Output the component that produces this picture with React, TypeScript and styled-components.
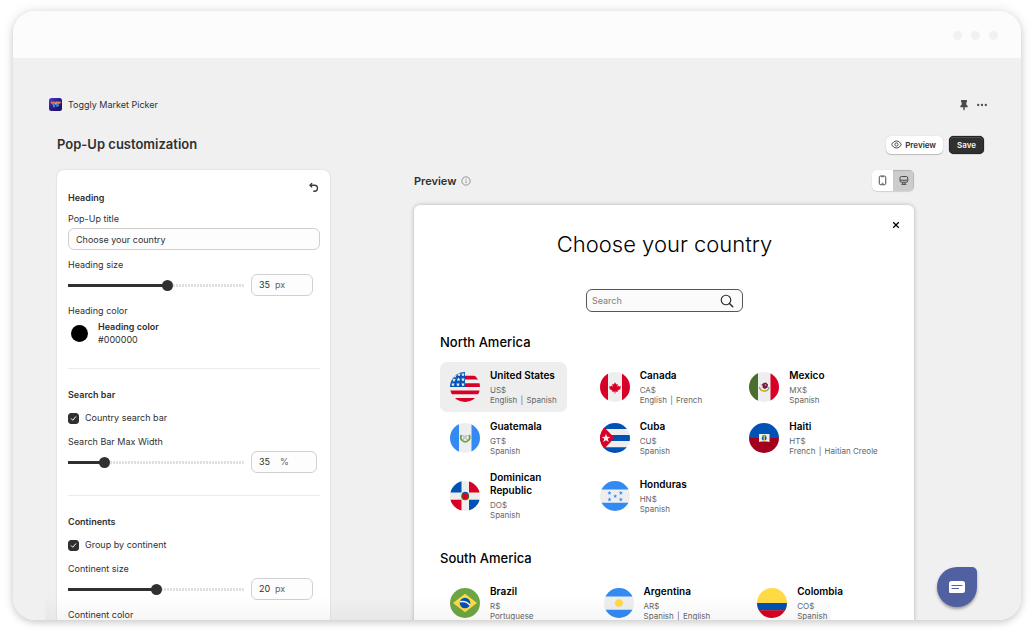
import React, { useState } from "react";
import styled, { createGlobalStyle } from "styled-components";

const GlobalStyle = createGlobalStyle`
  *, *::before, *::after { box-sizing: border-box; }
  html, body { margin: 0; background: #ffffff; }
  body { font-family: Inter, "Liberation Sans", sans-serif; color: #303030; }
  button, input { font: inherit; color: inherit; }
  h1, h2, h3, p, ul { margin: 0; padding: 0; }
`;

/* ---------- window frame ---------- */

const Stage = styled.div`
  display: flex;
  height: 100vh;
  padding: 11px 13px 15px;
`;

const Frame = styled.div`
  position: relative;
  flex: 1;
  min-width: 0;
  display: flex;
  flex-direction: column;
  overflow: hidden;
  background: #f0f0f0;
  border-radius: 22px;
`;

const FrameShadow = styled.div`
  flex: 1;
  min-width: 0;
  display: flex;
  border-radius: 22px;
  box-shadow: 0 0 12px rgba(0, 0, 0, 0.13), 0 3px 6px rgba(0, 0, 0, 0.12);
`;

const FrameBar = styled.div`
  flex: none;
  display: flex;
  align-items: center;
  justify-content: flex-end;
  gap: 9px;
  height: 47px;
  padding: 2px 23px 0 0;
  background: #fcfcfc;
`;

const FrameDot = styled.span`
  width: 9px;
  height: 9px;
  border-radius: 50%;
  background: #f1f1f1;
`;

const Fade = styled.div`
  position: absolute;
  left: 32px;
  right: 190px;
  bottom: 0;
  height: 24px;
  background: linear-gradient(rgba(0, 0, 0, 0), rgba(0, 0, 0, 0.035));
  pointer-events: none;
`;

/* ---------- app header ---------- */

const AppBar = styled.header`
  flex: none;
  display: flex;
  align-items: center;
  gap: 6px;
  height: 28px;
  margin: 33px 22px 0 33px;
  padding: 0 11px 0 3px;
  border-bottom: 1px solid #eeeeee;
`;

const AppName = styled.span`
  flex: 1;
  font-size: 9px;
  line-height: 14px;
`;

const IconButton = styled.button`
  display: inline-flex;
  align-items: center;
  justify-content: center;
  padding: 0;
  border: 0;
  background: none;
  cursor: pointer;
`;

const BarActions = styled.div`
  display: flex;
  align-items: center;
  gap: 7px;
`;

const Page = styled.main`
  padding: 16px 37px 0 44px;
`;

const TitleRow = styled.div`
  display: flex;
  align-items: center;
  gap: 6px;
  height: 19px;
`;

const PageTitle = styled.h1`
  flex: 1;
  font-size: 13px;
  line-height: 19px;
  font-weight: 600;
`;

const PillButton = styled.button<{ $dark?: boolean }>`
  display: inline-flex;
  align-items: center;
  gap: 3px;
  height: 18px;
  padding: ${(p) => (p.$dark ? "0 8px" : "0 7px 0 5px")};
  border: 0;
  border-radius: 5px;
  font-size: 8px;
  line-height: 12px;
  font-weight: 600;
  cursor: pointer;
  color: ${(p) => (p.$dark ? "#f4f4f4" : "#303030")};
  background: ${(p) => (p.$dark ? "#303030" : "#ffffff")};
  box-shadow: ${(p) =>
    p.$dark
      ? "inset 0 0 0 1px #242424, inset 0 1px 0 1px #4c4c4c, 0 0 1px #000000"
      : "0 1px 1px rgba(0, 0, 0, 0.2), 0 0 1px rgba(0, 0, 0, 0.2)"};
`;

const Columns = styled.div`
  display: flex;
  align-items: flex-start;
  gap: 84px;
  margin-top: 16px;
`;

/* ---------- settings panel ---------- */

const Panel = styled.form`
  position: relative;
  flex: 0 0 273px;
  padding: 21px 10px 24px 11px;
  background: #ffffff;
  border-radius: 7px;
  box-shadow: 0 0 2px rgba(0, 0, 0, 0.16);
`;

const ResetButton = styled(IconButton)`
  position: absolute;
  top: 12px;
  right: 11px;
`;

const Section = styled.section`
  display: flex;
  flex-direction: column;
  padding-bottom: 22px;

  & + & {
    padding-top: 19px;
    border-top: 1px solid #ebebeb;
  }
`;

const SectionTitle = styled.h2`
  margin-bottom: 7px;
  font-size: 9px;
  line-height: 14px;
  font-weight: 600;
`;

const Field = styled.div`
  display: flex;
  flex-direction: column;
  gap: 2px;

  & + & { margin-top: 8px; }
`;

const labelText = `
  font-size: 9px;
  line-height: 14px;
`;

const Label = styled.label`
  ${labelText}
`;

const TextInput = styled.input`
  width: 100%;
  height: 22px;
  padding: 0 7px;
  border: 1px solid #cfcfcf;
  border-radius: 6px;
  background: #fdfdfd;
  font-size: 9px;
  line-height: 14px;
`;

const SliderRow = styled.div`
  display: flex;
  align-items: center;
  gap: 7px;
`;

const Slider = styled.input`
  appearance: none;
  flex: 0 1 176px;
  min-width: 0;
  height: 11px;
  margin: 0;
  background:
    linear-gradient(#303030, #303030) 0 4px / var(--fill) 3px no-repeat,
    repeating-linear-gradient(90deg, #e0e0e0 0 2px, #ffffff 2px 3px) 0 4px / 100% 3px no-repeat;
  cursor: pointer;

  &::-webkit-slider-thumb {
    appearance: none;
    width: 11px;
    height: 11px;
    border-radius: 50%;
    background: #303030;
  }
`;

const NumberBox = styled.div<{ $wide?: boolean }>`
  display: flex;
  align-items: center;
  width: ${(p) => (p.$wide ? "66px" : "62px")};
  height: 22px;
  padding-left: 7px;
  border: 1px solid #d0d0d0;
  border-radius: 6px;
  background: #fdfdfd;
  font-size: 9px;
  line-height: 14px;
`;

const NumberInput = styled.input<{ $wide?: boolean }>`
  appearance: textfield;
  width: ${(p) => (p.$wide ? "21px" : "16px")};
  padding: 0;
  border: 0;
  outline: 0;
  background: none;

  &::-webkit-inner-spin-button { appearance: none; margin: 0; }
`;

const Unit = styled.span`
  color: #616161;
`;

const CheckRow = styled.label`
  display: flex;
  align-items: center;
  gap: 6px;
  margin: 2px 0 10px;
  ${labelText}
`;

const CheckShell = styled.span`
  display: grid;
  width: 11px;
  height: 11px;

  > * { grid-area: 1 / 1; }
`;

const CheckInput = styled.input`
  appearance: none;
  width: 11px;
  height: 11px;
  margin: 0;
  border: 1px solid #303030;
  border-radius: 3px;

  &:checked { background: #303030; }
`;

const ColorRow = styled.div`
  display: flex;
  align-items: center;
  gap: 10px;
  padding: 0 3px;
`;

const Swatch = styled.button`
  width: 17px;
  height: 17px;
  padding: 0;
  border: 0;
  border-radius: 50%;
  background: #000000;
`;

const ColorText = styled.div`
  font-size: 9px;
  line-height: 13px;
`;

const ColorName = styled.p`
  font-weight: 600;
`;

/* ---------- preview ---------- */

const PreviewColumn = styled.section`
  flex: 1;
  min-width: 0;
  margin-right: 70px;
`;

const PreviewHead = styled.div`
  display: flex;
  align-items: center;
  gap: 5px;
  height: 21px;
  margin-bottom: 14px;
`;

const PreviewTitle = styled.h2`
  font-size: 11px;
  line-height: 16px;
  font-weight: 600;
`;

const Segment = styled.div`
  display: flex;
  height: 21px;
  margin-left: auto;
  overflow: hidden;
  border-radius: 5px;
  box-shadow: 0 1px 1px rgba(0, 0, 0, 0.12), 0 0 1px rgba(0, 0, 0, 0.15);
`;

const SegmentButton = styled(IconButton)<{ $active?: boolean }>`
  width: 21px;
  height: 21px;
  background: ${(p) => (p.$active ? "#cccccc" : "#ffffff")};
  box-shadow: ${(p) => (p.$active ? "inset 0 1px 1px #b0b0b0, inset -1px 0 1px #bdbdbd" : "none")};
`;

const Popup = styled.div`
  position: relative;
  display: flex;
  flex-direction: column;
  padding: 24px 25px 40px 26px;
  background: #ffffff;
  border-radius: 6px;
  box-shadow: 0 0 4px rgba(0, 0, 0, 0.26);
`;

const CloseButton = styled(IconButton)`
  position: absolute;
  top: 15px;
  right: 13px;
  color: #000000;
`;

const PopupTitle = styled.h2`
  text-align: center;
  font-size: 22px;
  line-height: 30px;
  font-weight: 300;
  color: #000000;
`;

const SearchBox = styled.div`
  display: flex;
  align-items: center;
  align-self: center;
  height: 23px;
  margin: 30px 0 21px;
  padding: 0 8px 0 5px;
  border: 1px solid #555555;
  border-radius: 6px;
  background: #fbfbfb;
`;

const SearchInput = styled.input`
  flex: 1;
  min-width: 0;
  padding: 0;
  border: 0;
  outline: 0;
  background: none;
  font-size: 9px;
  line-height: 14px;

  &::placeholder { color: #808080; }
`;

const Continent = styled.section`
  & + & { margin-top: 22px; }
`;

const ContinentTitle = styled.h3`
  margin-bottom: 11px;
  font-size: 13px;
  line-height: 18px;
  font-weight: 500;
  color: #000000;
`;

const CountryGrid = styled.ul<{ $columns: string }>`
  display: grid;
  grid-template-columns: ${(p) => p.$columns};
  align-items: center;
  justify-items: start;
  row-gap: 1px;
  list-style: none;
`;

const Country = styled.li<{ $selected?: boolean }>`
  display: flex;
  align-items: center;
  gap: 10px;
  padding: 7px 10px;
  border-radius: 7px;
  background: ${(p) => (p.$selected ? "#eeeeee" : "transparent")};
`;

const Flag = styled.svg`
  flex: none;
  width: 30px;
  height: 30px;
  border-radius: 50%;
`;

const CountryName = styled.p`
  max-width: 90px;
  margin-bottom: 3px;
  font-size: 10px;
  line-height: 13px;
  font-weight: 600;
  color: #000000;
`;

const CountryMeta = styled.p`
  font-size: 8px;
  line-height: 10px;
  color: #666666;
  white-space: nowrap;
`;

const Divider = styled.span`
  margin: 0 1px;
`;

const ChatButton = styled.button`
  position: absolute;
  right: 44px;
  bottom: 13px;
  display: flex;
  align-items: center;
  justify-content: center;
  width: 40px;
  height: 40px;
  padding: 0;
  border: 0;
  border-radius: 50% 5px 50% 50%;
  background: #5060a0;
  box-shadow: 0 2px 3px rgba(0, 0, 0, 0.35);
  cursor: pointer;
`;

/* ---------- icons ---------- */

const AppLogo = () => (
  <svg width="13" height="13" viewBox="0 0 26 26" aria-hidden="true">
    <defs>
      <linearGradient id="logo" x1="0" y1="0" x2="1" y2="1">
        <stop offset="0" stopColor="#4a3fd0" />
        <stop offset="0.5" stopColor="#2a1a86" />
        <stop offset="1" stopColor="#1d0f66" />
      </linearGradient>
    </defs>
    <rect width="26" height="26" rx="5" fill="url(#logo)" />
    <path d="M3 7h8l2 2-3 4H7L4 11z" fill="#e8663c" />
    <path d="M13 7h10l1 3-4 2h-6z" fill="#f08048" />
    <path d="M7 12l4 1 1 5-3 1z" fill="#4aa3e0" />
    <path d="M13 12l5-2 3 5-4 3-3-1z" fill="#2f7fd8" />
    <path d="M12 8l4 2-2 4-3-2z" fill="#55c8d8" />
  </svg>
);

const PinIcon = () => (
  <svg width="10" height="12" viewBox="0 0 20 24" fill="#4a4a4a" aria-hidden="true">
    <path d="M5 2h10a1 1 0 0 1 1 1v2a1 1 0 0 1-1 1l-.6 5c2 1 3 2.600 3 4.500a1 1 0 0 1-1 1H11.500V21L10 23 8.500 21v-4.500H3.600a1 1 0 0 1-1-1c0-1.900 1-3.500 3-4.500L5 6a1 1 0 0 1-1-1V3a1 1 0 0 1 1-1z" />
  </svg>
);

const MoreIcon = () => (
  <svg width="12" height="12" viewBox="0 0 12 12" fill="#4a4a4a" aria-hidden="true">
    <circle cx="2.200" cy="6" r="1.150" />
    <circle cx="6" cy="6" r="1.150" />
    <circle cx="9.800" cy="6" r="1.150" />
  </svg>
);

const EyeIcon = () => (
  <svg width="11" height="11" viewBox="0 0 22 22" fill="none" stroke="#4a4a4a" strokeWidth="2" aria-hidden="true">
    <path d="M1.600 11C3 7 6.600 4 11 4s8 3 9.400 7c-1.400 4-5 7-9.400 7s-8-3-9.400-7z" />
    <circle cx="11" cy="11" r="3.200" />
  </svg>
);

const UndoIcon = () => (
  <svg width="11" height="11" viewBox="0 0 22 22" fill="none" stroke="#3c3c3c" strokeWidth="2.600" strokeLinecap="round" strokeLinejoin="round" aria-hidden="true">
    <path d="M7.500 3L4 6.500 7.500 10" />
    <path d="M4.500 6.500H13a5.700 5.700 0 0 1 0 12h-1.500" />
  </svg>
);

const InfoIcon = () => (
  <svg width="10" height="10" viewBox="0 0 20 20" fill="none" stroke="#8a8a8a" strokeWidth="1.800" aria-hidden="true">
    <circle cx="10" cy="10" r="8.300" />
    <path d="M10 9.200v5M10 5.500v2" />
  </svg>
);

const PhoneIcon = () => (
  <svg width="9" height="11" viewBox="0 0 18 22" fill="none" stroke="#4a4a4a" strokeWidth="2" aria-hidden="true">
    <rect x="2.500" y="2" width="13" height="17.500" rx="3" />
    <path d="M6.500 3.500h5M7 16.500h4" strokeWidth="1.600" />
  </svg>
);

const DesktopIcon = () => (
  <svg width="10" height="11" viewBox="0 0 20 22" fill="none" stroke="#4a4a4a" strokeWidth="2" aria-hidden="true">
    <rect x="2" y="3" width="15.500" height="11.500" rx="3" />
    <path d="M2 10.500h15.500M7.500 15v3M12 15v3M5 18.800h9.500" />
  </svg>
);

const CloseIcon = () => (
  <svg width="10" height="10" viewBox="0 0 10 10" stroke="#000000" strokeWidth="1.300" aria-hidden="true">
    <path d="M2.200 2.200l5.600 5.600M7.800 2.200L2.200 7.800" />
  </svg>
);

const SearchIcon = () => (
  <svg width="14" height="14" viewBox="0 0 28 28" fill="none" stroke="#303030" strokeWidth="2.400" strokeLinecap="round" aria-hidden="true">
    <circle cx="12" cy="12" r="9.500" />
    <path d="M19 19l6.500 6.500" strokeWidth="3" />
  </svg>
);

const CheckIcon = () => (
  <svg width="11" height="11" viewBox="0 0 22 22" fill="none" stroke="#ffffff" strokeWidth="2" strokeLinecap="round" strokeLinejoin="round" pointerEvents="none" aria-hidden="true">
    <path d="M6.500 11.500l3 3 6-7" />
  </svg>
);

const ChatIcon = () => (
  <svg width="16" height="12" viewBox="0 0 32 24" aria-hidden="true">
    <path d="M5 0h22a5 5 0 0 1 5 5v14a5 5 0 0 1-5 5H2a2 2 0 0 1-2-2V5a5 5 0 0 1 5-5z" fill="#ffffff" />
    <path d="M6 9h20M6 15h13" stroke="#5060a0" strokeWidth="2.400" strokeLinecap="round" />
  </svg>
);

/* ---------- flags, drawn on a 30 x 30 grid ---------- */

const star = (cx: number, cy: number, r: number) =>
  Array.from({ length: 10 }, (_, i) => {
    const a = -Math.PI / 2 + (i * Math.PI) / 5;
    const d = i % 2 ? r * 0.4 : r;
    return `${cx + d * Math.cos(a)},${cy + d * Math.sin(a)}`;
  }).join(" ");

const flags: Record<string, React.ReactNode> = {
  us: (
    <>
      <rect width="30" height="30" fill="#eeeeee" />
      <path d="M15 3.750h15V7.500H15zM15 11.250h15V15H15zM0 18.500h30v3.750H0zM0 26h30v4H0z" fill="#d80027" />
      <rect width="15" height="15" fill="#0052b4" />
      {[[5, 4], [9, 2.5], [13, 2.5], [4, 8], [8.500, 7.500], [13, 7.500], [3, 12.500], [8, 12.500], [13, 12.500]].map(([x, y]) => (
        <polygon key={`${x}-${y}`} points={star(x, y, 2.200)} fill="#eeeeee" />
      ))}
    </>
  ),
  ca: (
    <>
      <rect width="30" height="30" fill="#eeeeee" />
      <path d="M0 0h8v30H0zM22 0h8v30h-8z" fill="#d80027" />
      <path d="M15 10.200l1.300 2.300 1.500-.7-.5 3 1.500-1.200.4 1 1.900-.4-1 2 .7.500-3.300 2 .2 1.300-2.300-.5v2h-.8v-2l-2.300.5.2-1.300-3.300-2 .7-.5-1-2 1.900.4.400-1 1.500 1.200-.5-3 1.500.7z" fill="#d80027" />
    </>
  ),
  mx: (
    <>
      <rect width="30" height="30" fill="#eeeeee" />
      <rect width="9" height="30" fill="#496e2d" />
      <rect x="21.500" width="8.500" height="30" fill="#d80027" />
      <path d="M10.500 15a4.800 4.800 0 0 0 9.500 0" fill="none" stroke="#7fa87a" strokeWidth="1.400" />
      <path d="M12.500 13l2-2 2.500-.5 2 2-.5 3-2.500 1.500-2-1z" fill="#751a46" />
      <path d="M11.500 12.500l2 1.200-.5 2.300M16 12l1 2" fill="none" stroke="#c9b59a" strokeWidth="0.900" />
      <path d="M13 18.500h4" stroke="#ffb300" strokeWidth="1.200" />
    </>
  ),
  gt: (
    <>
      <rect width="30" height="30" fill="#eeeeee" />
      <path d="M0 0h9v30H0zM21.500 0H30v30h-8.500z" fill="#338af3" />
      <path d="M11.500 12a4.400 4.400 0 1 0 7.500 0" fill="none" stroke="#6da544" strokeWidth="1.800" />
      <path d="M12.500 12l5 5M17.500 12l-5 5" stroke="#9a9a9a" strokeWidth="1" />
      <rect x="13.500" y="12.500" width="3" height="3.500" fill="#c4c4c4" />
    </>
  ),
  cu: (
    <>
      <rect width="30" height="30" fill="#eeeeee" />
      <path d="M0 0h30v6H0zM0 12h30v6H0zM0 24.300h30V30H0z" fill="#0052b4" />
      <path d="M0 0l4 4 10.500 11L4 26l-4 4z" fill="#d80027" />
      <polygon points={star(6, 15.300, 4.600)} fill="#eeeeee" />
    </>
  ),
  ht: (
    <>
      <rect width="30" height="15" fill="#0052b4" />
      <rect y="15" width="30" height="15" fill="#a2001d" />
      <rect x="10" y="11" width="10.500" height="8" fill="#eeeeee" />
      <path d="M10 19c2-1.500 8.500-1.500 10.500 0z" fill="#6da544" />
      <circle cx="15.200" cy="15.200" r="2.400" fill="#0052b4" />
      <path d="M15.200 13v5" stroke="#ffda44" strokeWidth="1.200" />
      <path d="M13 13.200c1-1.200 3.500-1.200 4.500 0" stroke="#6da544" strokeWidth="1" fill="none" />
    </>
  ),
  dr: (
    <>
      <rect width="30" height="30" fill="#eeeeee" />
      <path d="M0 0h11.500v11.500H0zM19 18.700h11V30H19z" fill="#0052b4" />
      <path d="M19 0h11v11.500H19zM0 18.700h11.500V30H0z" fill="#d80027" />
      <circle cx="15.200" cy="15.200" r="3.400" fill="#d80027" stroke="#496e2d" strokeWidth="1.200" />
      <path d="M12.300 12.800a3.800 3.800 0 0 1 5.800 0" stroke="#0052b4" strokeWidth="1.200" fill="none" />
    </>
  ),
  hn: (
    <>
      <rect width="30" height="30" fill="#eeeeee" />
      <path d="M0 0h30v8.500H0zM0 21.700h30V30H0z" fill="#338af3" />
      {[[9.500, 12], [20.800, 12], [15.200, 15.200], [9.500, 18.500], [20.800, 18.500]].map(([x, y]) => (
        <polygon key={`${x}-${y}`} points={star(x, y, 2.200)} fill="#338af3" />
      ))}
    </>
  ),
  br: (
    <>
      <rect width="30" height="30" fill="#6da544" />
      <path d="M15 5.800L27 15 15 24.200 3 15z" fill="#ffda44" />
      <circle cx="15" cy="15" r="5.300" fill="#0052b4" />
      <path d="M10 13.800c3.500-.8 7.500.3 10 3.400" stroke="#eeeeee" strokeWidth="1.400" fill="none" />
    </>
  ),
  ar: (
    <>
      <rect width="30" height="30" fill="#eeeeee" />
      <path d="M0 0h30v8.500H0zM0 21.700h30V30H0z" fill="#338af3" />
      <circle cx="15" cy="15" r="3.500" fill="#ffda44" stroke="#ffda44" strokeWidth="1.400" strokeDasharray="1.200 1" />
      <circle cx="15" cy="15" r="3.300" fill="#ffda44" />
    </>
  ),
  co: (
    <>
      <rect width="30" height="30" fill="#ffda44" />
      <rect y="15" width="30" height="7.500" fill="#0052b4" />
      <rect y="22.300" width="30" height="7.700" fill="#d80027" />
    </>
  ),
};

/* ---------- data ---------- */

type CountryData = { flag: string; name: string; currency: string; languages: string[]; selected?: boolean };

const continents: { name: string; columns: string; countries: CountryData[] }[] = [
  {
    name: "North America",
    columns: "repeat(3, minmax(0, 1fr))",
    countries: [
      { flag: "us", name: "United States", currency: "US$", languages: ["English", "Spanish"], selected: true },
      { flag: "ca", name: "Canada", currency: "CA$", languages: ["English", "French"] },
      { flag: "mx", name: "Mexico", currency: "MX$", languages: ["Spanish"] },
      { flag: "gt", name: "Guatemala", currency: "GT$", languages: ["Spanish"] },
      { flag: "cu", name: "Cuba", currency: "CU$", languages: ["Spanish"] },
      { flag: "ht", name: "Haiti", currency: "HT$", languages: ["French", "Haitian Creole"] },
      { flag: "dr", name: "Dominican Republic", currency: "DO$", languages: ["Spanish"] },
      { flag: "hn", name: "Honduras", currency: "HN$", languages: ["Spanish"] },
    ],
  },
  {
    name: "South America",
    columns: "minmax(0, 13fr) minmax(0, 13fr) minmax(0, 12fr)",
    countries: [
      { flag: "br", name: "Brazil", currency: "R$", languages: ["Portuguese"] },
      { flag: "ar", name: "Argentina", currency: "AR$", languages: ["Spanish", "English"] },
      { flag: "co", name: "Colombia", currency: "CO$", languages: ["Spanish"] },
    ],
  },
];

/* ---------- controls ---------- */

type SizeFieldProps = {
  id: string;
  label: string;
  unit: string;
  min: number;
  max: number;
  value: number;
  wide?: boolean;
  onChange: (value: number) => void;
};

const SizeField = ({ id, label, unit, min, max, value, wide, onChange }: SizeFieldProps) => (
  <Field>
    <Label htmlFor={id}>{label}</Label>
    <SliderRow>
      <Slider
        id={id}
        type="range"
        min={min}
        max={max}
        value={value}
        onChange={(e) => onChange(Number(e.target.value))}
        style={{ "--fill": `${((value - min) / (max - min)) * 100}%` } as React.CSSProperties}
      />
      <NumberBox $wide={wide}>
        <NumberInput
          $wide={wide}
          type="number"
          aria-label={label}
          value={value}
          onChange={(e) => onChange(Number(e.target.value))}
        />
        <Unit>{unit}</Unit>
      </NumberBox>
    </SliderRow>
  </Field>
);

type CheckFieldProps = { label: string; checked: boolean; onChange: (checked: boolean) => void };

const CheckField = ({ label, checked, onChange }: CheckFieldProps) => (
  <CheckRow>
    <CheckShell>
      <CheckInput type="checkbox" checked={checked} onChange={(e) => onChange(e.target.checked)} />
      {checked && <CheckIcon />}
    </CheckShell>
    {label}
  </CheckRow>
);

export default function App() {
  const [title, setTitle] = useState("Choose your country");
  const [headingSize, setHeadingSize] = useState(35);
  const [searchOn, setSearchOn] = useState(true);
  const [searchWidth, setSearchWidth] = useState(35);
  const [grouped, setGrouped] = useState(true);
  const [continentSize, setContinentSize] = useState(20);

  return (
    <Stage>
      <GlobalStyle />
      <FrameShadow>
        <Frame>
          <FrameBar>
            <FrameDot />
            <FrameDot />
            <FrameDot />
          </FrameBar>

          <AppBar>
            <AppLogo />
            <AppName>Toggly Market Picker</AppName>
            <BarActions>
              <IconButton aria-label="Pin app"><PinIcon /></IconButton>
              <IconButton aria-label="More actions"><MoreIcon /></IconButton>
            </BarActions>
          </AppBar>

          <Page>
            <TitleRow>
              <PageTitle>Pop-Up customization</PageTitle>
              <PillButton><EyeIcon />Preview</PillButton>
              <PillButton $dark>Save</PillButton>
            </TitleRow>

            <Columns>
              <Panel>
                <ResetButton type="button" aria-label="Reset"><UndoIcon /></ResetButton>
                <Section>
                  <SectionTitle>Heading</SectionTitle>
                  <Field>
                    <Label htmlFor="popup-title">Pop-Up title</Label>
                    <TextInput id="popup-title" value={title} onChange={(e) => setTitle(e.target.value)} />
                  </Field>
                  <SizeField id="heading-size" label="Heading size" unit="px" min={1} max={61} value={headingSize} onChange={setHeadingSize} />
                  <Field>
                    <Label htmlFor="heading-color">Heading color</Label>
                    <ColorRow>
                      <Swatch id="heading-color" type="button" />
                      <ColorText>
                        <ColorName>Heading color</ColorName>
                        <p>#000000</p>
                      </ColorText>
                    </ColorRow>
                  </Field>
                </Section>

                <Section>
                  <SectionTitle>Search bar</SectionTitle>
                  <CheckField label="Country search bar" checked={searchOn} onChange={setSearchOn} />
                  <SizeField id="search-width" label="Search Bar Max Width" unit="%" min={20} max={100} value={searchWidth} wide onChange={setSearchWidth} />
                </Section>

                <Section>
                  <SectionTitle>Continents</SectionTitle>
                  <CheckField label="Group by continent" checked={grouped} onChange={setGrouped} />
                  <SizeField id="continent-size" label="Continent size" unit="px" min={10} max={30} value={continentSize} onChange={setContinentSize} />
                  <Field>
                    <Label htmlFor="continent-color">Continent color</Label>
                    <ColorRow>
                      <Swatch id="continent-color" type="button" />
                    </ColorRow>
                  </Field>
                </Section>
              </Panel>

              <PreviewColumn>
                <PreviewHead>
                  <PreviewTitle>Preview</PreviewTitle>
                  <InfoIcon />
                  <Segment>
                    <SegmentButton aria-label="Mobile preview"><PhoneIcon /></SegmentButton>
                    <SegmentButton $active aria-label="Desktop preview"><DesktopIcon /></SegmentButton>
                  </Segment>
                </PreviewHead>

                <Popup>
                  <CloseButton aria-label="Close"><CloseIcon /></CloseButton>
                  <PopupTitle>{title}</PopupTitle>
                  {searchOn && (
                    <SearchBox style={{ width: `${searchWidth}%` }}>
                      <SearchInput placeholder="Search" aria-label="Search countries" />
                      <SearchIcon />
                    </SearchBox>
                  )}
                  {continents.map((continent) => (
                    <Continent key={continent.name}>
                      {grouped && <ContinentTitle>{continent.name}</ContinentTitle>}
                      <CountryGrid $columns={continent.columns}>
                        {continent.countries.map((c) => (
                          <Country key={c.name} $selected={c.selected}>
                            <Flag viewBox="0 0 30 30" aria-hidden="true">{flags[c.flag]}</Flag>
                            <div>
                              <CountryName>{c.name}</CountryName>
                              <CountryMeta>{c.currency}</CountryMeta>
                              <CountryMeta>
                                {c.languages.map((language, i) => (
                                  <React.Fragment key={language}>
                                    {i > 0 && <Divider> | </Divider>}
                                    {language}
                                  </React.Fragment>
                                ))}
                              </CountryMeta>
                            </div>
                          </Country>
                        ))}
                      </CountryGrid>
                    </Continent>
                  ))}
                </Popup>
              </PreviewColumn>
            </Columns>
          </Page>

          <Fade />
          <ChatButton aria-label="Open chat"><ChatIcon /></ChatButton>
        </Frame>
      </FrameShadow>
    </Stage>
  );
}
